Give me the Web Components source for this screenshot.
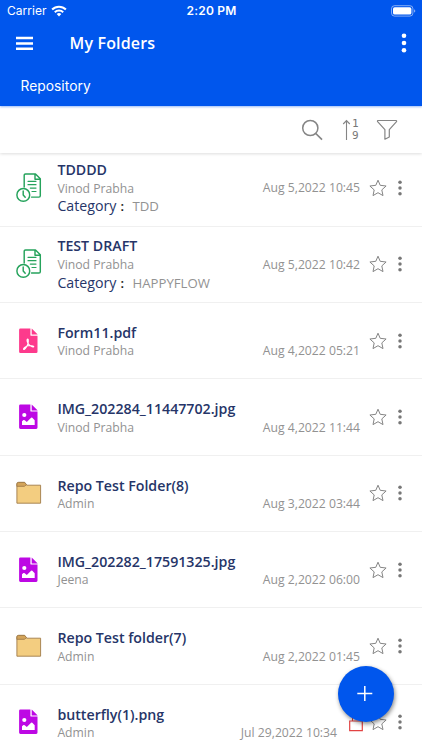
<!DOCTYPE html>
<html lang="en">
<head>
<meta charset="utf-8">
<title>My Folders</title>
<style>
html,body{margin:0;height:100%;overflow:hidden;background:#fff}
body{font-family:"Open Sans","Noto Sans",sans-serif}
</style>
</head>
<body>
<folders-app></folders-app>
<script>
const define = (name, html, setup) => customElements.define(name, class extends HTMLElement {
  connectedCallback() {
    if (this.shadowRoot) return;
    const t = document.createElement('template');
    t.innerHTML = html;
    this.attachShadow({ mode: 'open' }).append(t.content.cloneNode(true));
    if (setup) setup(this, this.shadowRoot);
  }
});

const icons = {
  wifi: [16, 12, '<path fill="#fff" d="M8 11.4 5.7 9.1a3.3 3.3 0 0 1 4.6 0ZM.4 3.8a10.8 10.8 0 0 1 15.2 0l-1.4 1.5a8.8 8.8 0 0 0-12.4 0ZM3.1 6.5a7 7 0 0 1 9.8 0l-1.4 1.4a5 5 0 0 0-7 0Z"/>'],
  battery: [25, 12, '<rect x=".5" y=".7" width="21.4" height="10.4" rx="3" fill="none" stroke="#fff" stroke-opacity=".5"/><rect x="2" y="2.2" width="18.4" height="7.4" rx="1.7" fill="#fff"/><path d="M23 4.2q1.3.5 1.3 1.7T23 7.6Z" fill="#fff" fill-opacity=".5"/>'],
  menu: [17, 15, '<path stroke="#fff" stroke-width="2.5" d="M0 2h17M0 7.4h17M0 12.8h17"/>'],
  search: [22, 22, '<g fill="none" stroke="#858585" stroke-width="1.5"><circle cx="9.3" cy="9" r="7.6"/><path d="m14.8 14.5 6.2 6.2" stroke-width="1.7"/></g>'],
  arrow: [8, 22, '<path d="M4.5 21V2M1.2 5 4.5 1.5 7.8 5" fill="none" stroke="#858585" stroke-width="1.1"/>'],
  filter: [22, 22, '<path d="M1.9 1.5h18.2q.8.2.4 1.2l-7.2 7.9v7.4l-4.4 2.2V10.6L1.6 2.7Q1.2 1.8 1.9 1.5Z" fill="none" stroke="#858585" stroke-width="1.2" stroke-linejoin="round"/>'],
  star: [18, 18, '<path d="m9 1.2 2.2 5.1 5.9.7-4.3 3.9 1.2 5.7L9 13.7l-5 2.9 1.2-5.7L.9 7l5.9-.7Z" fill="none" stroke="#858585" stroke-linejoin="round"/>'],
  dots: [4, 16, '<g fill="#777"><circle cx="2" cy="2.2" r="1.75"/><circle cx="2" cy="8" r="1.75"/><circle cx="2" cy="13.8" r="1.75"/></g>'],
  lightdots: [6, 20, '<g fill="#fff"><circle cx="3" cy="2.7" r="2.3"/><circle cx="3" cy="10" r="2.3"/><circle cx="3" cy="17.3" r="2.3"/></g>'],
  draft: [26, 30, '<g fill="none" stroke="#26a35c" stroke-width="1.45" stroke-linejoin="round" stroke-linecap="round"><path d="M8.2 14V2.3q0-1.3 1.3-1.3h10l4.8 4.8v17q0 1.3-1.3 1.3h-7.5M19 1.3v5h5"/><path d="M12 8.3h8M12 11.7h8M14.3 15.1H20M16 18.5h4" stroke-width="1.2"/><circle cx="7.3" cy="21.9" r="6.4"/><path d="M7.2 18v4l2 2.3"/></g>'],
  pdf: [26, 30, '<path fill="#fd3a8c" d="M4.4 2.6h10v6.3q0 .9.9.9h6.2v16q0 1.3-1.3 1.3H4.4q-1.3 0-1.3-1.3V3.9q0-1.3 1.3-1.3Zm11.3 0 6 6h-6Z"/><path d="M11.8 13.1c-1-.1-1 2.1.2 4.1 1.2 2.2 4.6 4.3 5.6 3.6.8-1-3.5-1.4-5.5-1-2.7.6-4.9 2.6-4.5 3.5.9.8 3-2.1 4-4.7.7-2 1.1-5.2.2-5.5Z" fill="none" stroke="#fff" stroke-width="1.15"/>'],
  image: [26, 30, '<path fill="#bd08e4" d="M4.4 2.4h10v6.3q0 .9.9.9h6.2v16q0 1.3-1.3 1.3H4.4q-1.3 0-1.3-1.3V3.7q0-1.3 1.3-1.3Zm11.3 0 6 6h-6Z"/><circle cx="8.3" cy="13" r="2.1" fill="#fff"/><path fill="#fff" d="M6 23v-3.7l1.5-1.2q.7-.4 1.2.1l2.1 1.9 4.3-4.4q.6-.5 1.2 0l2.4 2.6V23Z"/>'],
  folder: [26, 30, '<path d="M.9 25.2V6.1q0-1.7 1.7-1.7h6l2 2.8h14v18Z" fill="#f3cd80" stroke="#a07c49" stroke-width=".9"/><path d="M.9 8.3V5.9q0-1.5 1.6-1.5h6.2l1.8 2.2-2.1 1.7Z" fill="#d3a45a" stroke="#a07c49" stroke-width=".9"/>'],
  lock: [14, 22, '<path d="M3.5 10V5.5a3.5 3.5 0 0 1 7 0V10" fill="none" stroke="#e24343"/><path d="M.7 10h12.6v9.6H.7Z" fill="none" stroke="#e24343" stroke-width="1.2"/>'],
  plus: [16, 16, '<path d="M6.8 0v15M-.7 7.5h15" stroke="#fff" stroke-width="1.5"/>']
};

define('ui-icon', '<style>:host{display:block;flex:none;line-height:0}svg{display:block;overflow:visible}</style>', (el, root) => {
  const [w, h, body] = icons[el.getAttribute('name')];
  root.innerHTML += `<svg width="${w}" height="${h}" viewBox="0 0 ${w} ${h}">${body}</svg>`;
});

define('status-bar', `<style>
:host{display:grid;grid-template-columns:1fr auto 1fr;align-items:center;height:22px;padding:0 6px 0 7px;color:#fff;font:400 12px/22px Inter,sans-serif;box-sizing:border-box}
.left{display:flex;align-items:center;gap:4px;letter-spacing:.03px}.time{font-weight:600;letter-spacing:.2px}ui-icon:last-child{justify-self:end}
</style><div class="left"><span>Carrier</span><ui-icon name="wifi"></ui-icon></div><span class="time">2:20 PM</span><ui-icon name="battery"></ui-icon>`);

define('app-header', `<style>
:host{display:block;height:106px;background:#0056ed;color:#fff;box-shadow:0 1px 2px #0056ed66}
.bar{display:flex;align-items:center;height:42px;padding:0 15px 0 16px}
h1{margin:0 auto 0 36.5px;font:600 16px/22px "Open Sans",sans-serif;letter-spacing:.17px}
.crumb{padding:12px 20.5px 0;font:400 13.8px/21px Inter,sans-serif;letter-spacing:.03px}
</style><status-bar></status-bar><div class="bar"><ui-icon name="menu"></ui-icon><h1><slot></slot></h1><ui-icon name="lightdots"></ui-icon></div><div class="crumb"><slot name="crumb"></slot></div>`);

define('tool-bar', `<style>
:host{display:flex;align-items:center;justify-content:flex-end;height:47px;padding:0 24px 0 0;box-sizing:border-box;background:#fff;box-shadow:0 1px 3px #0002}
.sort{display:flex;align-items:center;gap:2px;margin:0 17px 0 19px}
.digits{display:grid;grid-template-rows:12px 12px;font:400 11px/12px "DejaVu Sans Mono",monospace;color:#777;width:7px}
.digits span{height:12px;overflow:hidden}
</style><ui-icon name="search"></ui-icon><div class="sort"><ui-icon name="arrow"></ui-icon><div class="digits"><span>1</span><span>9</span></div></div><ui-icon name="filter"></ui-icon>`);

define('file-row', `<style>
:host{display:flex;align-items:center;height:76.35px;box-sizing:border-box;border-bottom:1px solid #f0f0f0;padding:0 20px 0 16px;color:#929292;font-size:12.2px}
.text{display:grid;align-content:center;margin:0 auto 0 15.4px;grid-template-rows:18.5px 18.5px;white-space:nowrap;padding-top:1.2px}
.text.cat{grid-template-rows:18.3px 18.3px 18.3px;padding-top:0}
.title{font-weight:600;font-size:14.2px;line-height:19.4px;color:#263568}
.cat .title{line-height:18.6px}
.owner{line-height:19px}
.category{display:flex;line-height:18.6px;font-size:13.2px}
.key{font-size:14.2px;color:#263568}.colon{color:#111;margin:0 8.5px 0 4px;font-size:13px;font-weight:600}
.date{line-height:18px;margin-right:9px;white-space:nowrap;padding-top:21px}
.date.cat{padding-top:.6px}
.star{margin-right:11px}
ui-icon[name=lock]{margin:0 6px 0 3px}
</style><i class="type"></i><div class="text"><span class="title"></span><span class="owner"></span></div><span class="date"></span><ui-icon class="star" name="star"></ui-icon><ui-icon name="dots"></ui-icon>`, (el, root) => {
  const $ = s => root.querySelector(s), a = n => el.getAttribute(n);
  const icon = document.createElement('ui-icon');
  icon.setAttribute('name', a('type'));
  $('.type').replaceWith(icon);
  $('.title').textContent = a('name');
  $('.owner').textContent = a('owner');
  $('.date').textContent = a('date');
  if (a('category')) {
    $('.text').classList.add('cat');
    $('.date').classList.add('cat');
    const c = document.createElement('span');
    c.className = 'category';
    c.innerHTML = '<span class="key">Category</span><span class="colon">:</span><span></span>';
    c.lastChild.textContent = a('category');
    $('.text').append(c);
  }
  if (el.hasAttribute('locked')) {
    const l = document.createElement('ui-icon');
    l.setAttribute('name', 'lock');
    $('.date').after(l);
  }
});

define('add-button', `<style>
:host{display:grid;place-items:center;width:56px;height:56px;border-radius:50%;background:#0056ed;box-shadow:1px 2px 4px #0007}
</style><ui-icon name="plus"></ui-icon>`);

define('folders-app', `<style>
:host{display:block;position:relative;width:422px;height:750px;overflow:hidden;background:#fff}
main{margin-top:-2.6px}
tool-bar,app-header{position:relative}
app-header{z-index:1}
add-button{position:absolute;left:337.7px;top:665.5px}
</style>
<app-header>My Folders<span slot="crumb">Repository</span></app-header>
<tool-bar></tool-bar>
<main>
<file-row type="draft" name="TDDDD" owner="Vinod Prabha" category="TDD" date="Aug 5,2022 10:45"></file-row>
<file-row type="draft" name="TEST DRAFT" owner="Vinod Prabha" category="HAPPYFLOW" date="Aug 5,2022 10:42"></file-row>
<file-row type="pdf" name="Form11.pdf" owner="Vinod Prabha" date="Aug 4,2022 05:21"></file-row>
<file-row type="image" name="IMG_202284_11447702.jpg" owner="Vinod Prabha" date="Aug 4,2022 11:44"></file-row>
<file-row type="folder" name="Repo Test Folder(8)" owner="Admin" date="Aug 3,2022 03:44"></file-row>
<file-row type="image" name="IMG_202282_17591325.jpg" owner="Jeena" date="Aug 2,2022 06:00"></file-row>
<file-row type="folder" name="Repo Test folder(7)" owner="Admin" date="Aug 2,2022 01:45"></file-row>
<file-row type="image" name="butterfly(1).png" owner="Admin" date="Jul 29,2022 10:34" locked></file-row>
</main>
<add-button></add-button>`);
</script>
</body>
</html>
